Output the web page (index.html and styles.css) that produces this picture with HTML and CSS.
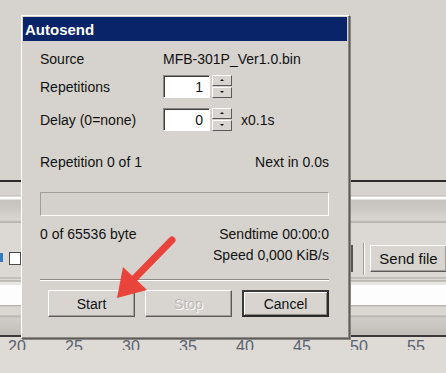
FILE: index.html
```html
<!DOCTYPE html>
<html lang="en">
<head>
	<title>Autosend</title>
	<link rel="stylesheet" href="styles.css">
</head>
<body>

	<div class="window">
		<div class="upper"></div>
		<div class="hline"></div>
		<div class="band"></div>
		<div class="toolbar">
			<span class="info"></span>
			<span class="check"></span>
			<span class="spacer"></span>
			<span class="field-edge"></span>
			<span class="sep"></span>
			<span class="btn send">Send file</span>
		</div>
		<div class="strip"></div>
		<div class="input-line"></div>
		<div class="lower"></div>
		<div class="dline"></div>
		<div class="ruler">
			<span>20</span><span>25</span><span>30</span><span>35</span>
			<span>40</span><span>45</span><span>50</span><span>55</span>
		</div>
	</div>

	<div class="dialog">
		<div class="title">Autosend</div>
		<div class="content">
			<div class="field source">
				<span class="lbl">Source</span>
				<span>MFB-301P_Ver1.0.bin</span>
			</div>

			<div class="field reps">
				<span class="lbl">Repetitions</span>
				<span class="spin-box">1</span>
				<span class="spin-btns"><span class="up"></span><span class="down"></span></span>
			</div>

			<div class="field delay">
				<span class="lbl">Delay (0=none)</span>
				<span class="spin-box">0</span>
				<span class="spin-btns"><span class="up"></span><span class="down"></span></span>
				<span class="unit">x0.1s</span>
			</div>

			<div class="row status"><span>Repetition 0 of 1</span><span>Next in 0.0s</span></div>
			<div class="progress"></div>
			<div class="row bytes"><span>0 of 65536 byte</span><span>Sendtime 00:00:0</span></div>
			<div class="row speed"><span></span><span>Speed 0,000 KiB/s</span></div>
			<div class="divider"></div>

			<div class="buttons">
				<span class="btn">Start</span>
				<span class="btn disabled">Stop</span>
				<span class="btn default">Cancel</span>
			</div>
		</div>
	</div>

	<svg class="arrow" width="446" height="373" viewBox="0 0 446 373">
		<line x1="172" y1="240" x2="132" y2="281" stroke="#e8443c" stroke-width="7" stroke-linecap="round"/>
		<polygon points="117,298 123,267 147,290" fill="#e8443c"/>
	</svg>

</body>
</html>
```

FILE: styles.css
```css
body {
	margin: 0;
	background: #dedbd6;
	font-family: "Liberation Sans", Arial, sans-serif;
	font-size: 14px;
	color: #111;
	overflow: hidden;
}

/* main window behind the dialog */
.window {
	width: 446px;
	height: 373px;
	background: #dedbd6;
}

.upper {
	height: 180px;
	background: #d6d3ce;
}

.hline {
	height: 2px;
	background: #2b2b2b;
}

.band {
	height: 41px;
	background: linear-gradient(#d6d3ce 0, #d6d3ce 13px, #b9b6b1 14px, #fdfdfc 15px, #fdfdfc 17px, #c6c3be 18px, #cbc8c3 26px, #dad7d2 38px, #b8b5b0 40px);
}

.toolbar {
	height: 52px;
	display: flex;
	align-items: flex-start;
	background: #dcd9d4;
}

.info {
	width: 3px;
	height: 9px;
	margin-top: 30px;
	background: #2c7cbf;
}

.check {
	box-sizing: border-box;
	width: 12px;
	height: 13px;
	margin: 29px 0 0 6px;
	background: #fff;
	border: 1px solid #4a4a4a;
}

.spacer {
	flex: 1;
}

.field-edge {
	width: 2px;
	height: 27px;
	margin-top: 22px;
	background: #555;
	border-left: 1px solid #fff;
}

.sep {
	width: 1px;
	height: 32px;
	margin: 20px 5px 0 10px;
	background: #9e9b96;
	border-right: 1px solid #fff;
}

.strip {
	height: 10px;
	background: linear-gradient(#dcd9d4 0, #dcd9d4 2px, #a9a6a1 3px, #dcd9d4 4px, #dcd9d4 5px, #9c9994 6px, #e8e6e2 7px);
}

.input-line {
	height: 20px;
	background: #fdfdfd;
}

.lower {
	height: 30px;
	background: linear-gradient(#a9a6a1 0, #dad7d2 2px, #dad7d2 10px, #b4b1ac 11px, #d0cdc8 13px, #c2bfba 29px);
}

.dline {
	height: 2px;
	background: #3a3a3a;
}

.ruler {
	height: 13px;
	overflow: hidden;
	display: flex;
	padding-left: 8px;
	background: #dedbd6;
	font-size: 16px;
	line-height: 30px;
	color: #5a6272;
}

.ruler span {
	width: 57px;
	flex: none;
	margin-top: -5px;
}

/* buttons */
.btn {
	display: flex;
	align-items: center;
	justify-content: center;
	box-sizing: border-box;
	width: 87px;
	height: 27px;
	background: #d8d5d0;
	border: 1px solid;
	border-color: #fff #5a5a5a #5a5a5a #fff;
	box-shadow: inset -1px -1px 0 #a19e99;
	font-size: 14px;
}

.btn.send {
	width: 76px;
	height: 27px;
	margin-top: 22px;
	border-right: none;
	font-size: 15px;
}

.btn.disabled {
	color: #bdbab5;
	text-shadow: 1px 1px 0 #fff;
}

.btn.default {
	border: 2px solid #2e2e2e;
	border-color: #3a3a3a #2a2a2a #2a2a2a #3a3a3a;
	box-shadow: inset 1px 1px 0 #fff, inset -1px -1px 0 #8a8783;
}

/* dialog overlay */
.dialog {
	position: absolute;
	left: 21px;
	top: 15px;
	width: 329px;
	height: 324px;
	box-sizing: border-box;
	background: #d6d3ce;
	border: 1px solid;
	border-color: #fff #5e5c59 #5e5c59 #fff;
	box-shadow: inset -1px -1px 0 #8d8a86, 1px 1px 0 #8a8782;
	padding: 1px 2px 0 1px;
}

.title {
	height: 24px;
	background: #0a246a;
	color: #fff;
	font-weight: bold;
	font-size: 15px;
	line-height: 25px;
	padding-left: 2px;
}

.content {
	padding: 8px 18px 0 17px;
}

.field {
	display: flex;
	align-items: center;
}

.field .lbl {
	width: 123px;
	flex: none;
}

.source {
	height: 20px;
}

.reps {
	height: 23px;
	margin-top: 6px;
}

.delay {
	height: 23px;
	margin-top: 10px;
}

.spin-box {
	box-sizing: border-box;
	width: 47px;
	height: 23px;
	background: #fff;
	border: 1px solid;
	border-color: #8a8782 #fff #fff #8a8782;
	box-shadow: inset 1px 1px 0 #404040;
	text-align: right;
	padding-right: 6px;
	line-height: 22px;
}

.spin-btns {
	display: flex;
	flex-direction: column;
	margin-left: 2px;
	height: 23px;
}

.spin-btns span {
	position: relative;
	box-sizing: border-box;
	width: 20px;
	height: 11px;
	background: #d8d5d0;
	border: 1px solid;
	border-color: #fff #5a5a5a #5a5a5a #fff;
}

.spin-btns .down {
	margin-top: 1px;
}

.spin-btns span::after {
	content: "";
	position: absolute;
	left: 7px;
	top: 3px;
	border-left: 2px solid transparent;
	border-right: 2px solid transparent;
}

.spin-btns .up::after {
	border-bottom: 2px solid #111;
}

.spin-btns .down::after {
	border-top: 2px solid #111;
}

.unit {
	margin-left: 9px;
}

.row {
	display: flex;
	justify-content: space-between;
	height: 18px;
	line-height: 18px;
	width: 289px;
}

.status {
	margin-top: 22px;
}

.progress {
	box-sizing: border-box;
	width: 289px;
	height: 24px;
	margin-top: 21px;
	border: 1px solid;
	border-color: #a19e99 #fcfcfb #fcfcfb #a19e99;
	background: #d4d1cc;
}

.bytes {
	margin-top: 9px;
}

.speed {
	margin-top: 3px;
}

.divider {
	width: 289px;
	height: 1px;
	margin-top: 15px;
	background: #8f8c87;
	border-bottom: 1px solid #fff;
}

.buttons {
	display: flex;
	justify-content: flex-end;
	gap: 10px;
	margin-top: 9px;
	width: 289px;
}

.arrow {
	position: absolute;
	left: 0;
	top: 0;
	pointer-events: none;
}
```
